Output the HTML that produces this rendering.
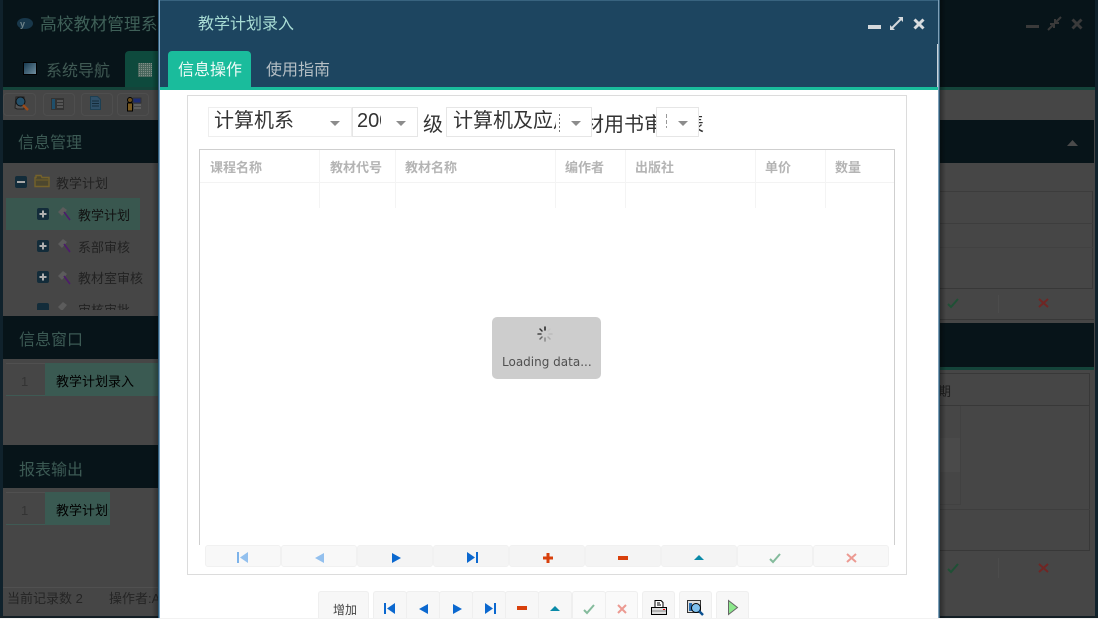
<!DOCTYPE html>
<html><head><meta charset="utf-8">
<style>
html,body{margin:0;padding:0;background:#fff;}
body{width:1098px;height:635px;overflow:hidden;position:relative;font-family:"Liberation Sans","Noto Sans CJK SC",sans-serif;}
.a{position:absolute;white-space:nowrap;}
.clip{overflow:hidden;}
svg{position:absolute;display:block;overflow:visible;}
.th{color:#b4b4b4;font-size:13px;font-weight:bold;top:159px;line-height:17px;}
.bar{top:545px;width:74px;height:20px;background:#f8f8f8;border:1px solid #f1f1f1;border-radius:3px;box-sizing:content-box;}
.btn{top:591px;height:27px;background:#f7f7f7;border:1px solid #efefef;border-bottom:none;border-radius:3px 3px 0 0;box-sizing:border-box;}
.tb{top:93px;height:23px;border:1px solid #4e4e4e;border-radius:4px;box-sizing:border-box;}
</style></head><body>

<!-- dimmed background window -->
<div class="a" style="left:0;top:0;width:1098px;height:618px;background:#464646;"></div>
<div class="a" style="left:0;top:0;width:1098px;height:87px;background:#071419;"></div>
<div class="a" style="left:0;top:87px;width:1098px;height:3px;background:#14443a;"></div>
<div class="a" style="left:0;top:0;width:3px;height:618px;background:#10222c;"></div>
<div class="a" style="left:1095px;top:0;width:3px;height:618px;background:#10222c;"></div>
<div class="a" style="left:0;top:616px;width:1098px;height:2px;background:#141f25;"></div>
<div class="a" style="left:0;top:618px;width:1098px;height:1px;background:#f2f2f2;"></div>

<svg style="left:17px;top:17px" width="16" height="13" viewBox="0 0 16 13"><ellipse cx="8" cy="6.500" rx="8" ry="5.500" fill="#18374a"/><text x="3" y="10" font-size="9" font-weight="bold" fill="#6f8389" font-family="Liberation Sans">y</text></svg>
<div class="a" style="left:40px;top:15px;font-size:16.800px;line-height:20px;color:#3f6058;width:120px;overflow:hidden;">高校教材管理系统</div>
<div class="a" style="left:23px;top:62px;width:14px;height:13px;background:linear-gradient(135deg,#173a50,#6f8d9e);border:1px solid #000;box-sizing:border-box;"></div>
<div class="a" style="left:46px;top:62px;font-size:16px;line-height:20px;color:#405a54;">系统导航</div>
<div class="a" style="left:125px;top:51px;width:35px;height:36px;background:#0e4a3d;border-radius:4px 0 0 0;"></div>
<div class="a" style="left:138px;top:63px;width:14px;height:14px;background:repeating-linear-gradient(90deg,rgba(70,100,90,.9) 0 1px,transparent 1px 2px),repeating-linear-gradient(0deg,#4d6a60 0 1px,#7f8f88 1px 2px);"></div>

<!-- toolbar icons -->
<div class="a tb" style="left:3px;width:33px;"></div>
<div class="a tb" style="left:43px;width:32px;"></div>
<div class="a tb" style="left:81px;width:32px;"></div>
<div class="a tb" style="left:117px;width:32px;"></div>
<svg style="left:13px;top:96px" width="16" height="16" viewBox="0 0 16 16"><path d="M3 1h8v12H4l-2-1z" fill="#555" stroke="#222"/><circle cx="7.500" cy="5.500" r="4.500" fill="#24506a" stroke="#111"/><path d="M10 9l5 5" stroke="#9a4a1a" stroke-width="2.500"/></svg>
<svg style="left:51px;top:98px" width="13" height="12" viewBox="0 0 13 12"><rect width="13" height="12" fill="#333"/><rect x="1" y="1" width="3" height="10" fill="#1f4f6b"/><path d="M6 3h6M6 6h6M6 9h6" stroke="#777"/></svg>
<svg style="left:90px;top:96px" width="11" height="14" viewBox="0 0 11 14"><path d="M.5 .5h7l3 3v10H.5z" fill="#2f5068" stroke="#1d3f52"/><path d="M2 5h7M2 7.500h7M2 10h7" stroke="#142b3a"/></svg>
<svg style="left:126px;top:97px" width="15" height="15" viewBox="0 0 15 15"><circle cx="4" cy="3" r="2.500" fill="#6a4e1c" stroke="#000"/><rect x="1.500" y="6" width="5" height="8" fill="#7a5a20" stroke="#000"/><rect x="7" y="1" width="8" height="5" fill="#1c2c74" stroke="#333"/><path d="M8 8h7M8 11h7" stroke="#666" stroke-width="1.500"/></svg>

<!-- left panel -->
<div class="a" style="left:3px;top:120px;width:155px;height:43px;background:#071419;"></div>
<div class="a" style="left:18px;top:134px;font-size:16px;line-height:20px;color:#3c5a54;">信息管理</div>
<div class="a" style="left:15px;top:176px;width:12px;height:12px;background:#132c3a;border-radius:2px;"></div>
<div class="a" style="left:17px;top:181px;width:8px;height:2px;background:#a8a8a8;"></div>
<svg style="left:34px;top:174px" width="16" height="14" viewBox="0 0 16 14"><path d="M1 3.500h1V1.500h5l1 2h7v9H1z" fill="#4c472f" stroke="#75622a" stroke-width="1.400"/><path d="M2 6h12" stroke="#75622a"/></svg>
<div class="a" style="left:56px;top:175px;font-size:13px;line-height:17px;color:#222;">教学计划</div>
<div class="a" style="left:6px;top:198px;width:134px;height:32px;background:#39574f;"></div>
<div class="a clip" style="left:0;top:198px;width:158px;height:112px;">
  <svg style="left:37px;top:10px" width="12" height="12" viewBox="0 0 12 12"><rect width="12" height="12" rx="2" fill="#132c3a"/><path d="M6 2.500v7M2.500 6h7" stroke="#b0b0b0" stroke-width="2"/></svg>
  <svg style="left:37px;top:42px" width="12" height="12" viewBox="0 0 12 12"><rect width="12" height="12" rx="2" fill="#132c3a"/><path d="M6 2.500v7M2.500 6h7" stroke="#b0b0b0" stroke-width="2"/></svg>
  <svg style="left:37px;top:73px" width="12" height="12" viewBox="0 0 12 12"><rect width="12" height="12" rx="2" fill="#132c3a"/><path d="M6 2.500v7M2.500 6h7" stroke="#b0b0b0" stroke-width="2"/></svg>
  <svg style="left:37px;top:105px" width="12" height="12" viewBox="0 0 12 12"><rect width="12" height="12" rx="2" fill="#132c3a"/></svg>
  <svg style="left:57px;top:8px" width="15" height="15" viewBox="0 0 15 15"><path d="M1 6l5-5 4 3-5 6z" fill="#5c5c5c"/><path d="M7 6l6 8" stroke="#4d1a6d" stroke-width="1.500"/></svg>
  <svg style="left:57px;top:40px" width="15" height="15" viewBox="0 0 15 15"><path d="M1 6l5-5 4 3-5 6z" fill="#5c5c5c"/><path d="M7 6l6 8" stroke="#4d1a6d" stroke-width="1.500"/></svg>
  <svg style="left:57px;top:72px" width="15" height="15" viewBox="0 0 15 15"><path d="M1 6l5-5 4 3-5 6z" fill="#5c5c5c"/><path d="M7 6l6 8" stroke="#4d1a6d" stroke-width="1.500"/></svg>
  <svg style="left:57px;top:103px" width="15" height="15" viewBox="0 0 15 15"><path d="M1 6l5-5 4 3-5 6z" fill="#5c5c5c"/></svg>
  <div class="a" style="left:78px;top:9px;font-size:13px;line-height:17px;color:#111;">教学计划</div>
  <div class="a" style="left:78px;top:41px;font-size:13px;line-height:17px;color:#222;">系部审核</div>
  <div class="a" style="left:78px;top:72px;font-size:13px;line-height:17px;color:#222;">教材室审核</div>
  <div class="a" style="left:78px;top:104px;font-size:13px;line-height:17px;color:#222;">审核审批</div>
</div>

<div class="a" style="left:3px;top:316px;width:155px;height:43px;background:#071419;"></div>
<div class="a" style="left:19px;top:331px;font-size:16px;line-height:20px;color:#3c5a54;">信息窗口</div>
<div class="a" style="left:6px;top:363px;width:39px;height:33px;border-bottom:1px solid #3f5a54;border-top:1px solid #505050;box-sizing:border-box;"></div>
<div class="a" style="left:45px;top:363px;width:113px;height:33px;background:#3a5a52;"></div>
<div class="a" style="left:21px;top:373px;font-size:13px;line-height:17px;color:#333;">1</div>
<div class="a" style="left:56px;top:373px;font-size:13px;line-height:17px;color:#000;">教学计划录入</div>

<div class="a" style="left:3px;top:445px;width:155px;height:43px;background:#071419;"></div>
<div class="a" style="left:19px;top:461px;font-size:16px;line-height:20px;color:#3c5a54;">报表输出</div>
<div class="a" style="left:6px;top:492px;width:39px;height:33px;border-bottom:1px solid #3f5a54;border-top:1px solid #505050;box-sizing:border-box;"></div>
<div class="a" style="left:45px;top:492px;width:65px;height:33px;background:#3a5a52;"></div>
<div class="a" style="left:21px;top:502px;font-size:13px;line-height:17px;color:#333;">1</div>
<div class="a clip" style="left:56px;top:502px;width:53px;font-size:13px;line-height:17px;color:#000;">教学计划录入</div>

<div class="a" style="left:3px;top:587px;width:155px;height:1px;background:#505050;"></div>
<div class="a" style="left:7px;top:590px;font-size:13px;line-height:17px;color:#252525;">当前记录数 2</div>
<div class="a clip" style="left:109px;top:590px;width:49px;font-size:13px;line-height:17px;color:#252525;">操作者:Admin</div>

<!-- right background -->
<div class="a" style="left:940px;top:120px;width:154px;height:43px;background:#071419;"></div>
<svg style="left:1067px;top:140px" width="11" height="6" viewBox="0 0 11 6"><path d="M5.500 0L11 6H0z" fill="#4a4a4a"/></svg>
<div class="a" style="left:940px;top:191px;width:153px;height:1px;background:#3c3c3c;"></div>
<div class="a" style="left:1092px;top:191px;width:1px;height:98px;background:#383838;"></div>
<div class="a" style="left:940px;top:223px;width:153px;height:1px;background:#3d3d3d;"></div>
<div class="a" style="left:940px;top:247px;width:153px;height:1px;background:#414141;"></div>
<div class="a" style="left:940px;top:288px;width:153px;height:1px;background:#383838;"></div>
<div class="a" style="left:940px;top:319px;width:154px;height:1px;background:#383838;"></div>
<div class="a" style="left:998px;top:295px;width:1px;height:18px;background:#4c4c4c;"></div>
<svg style="left:947px;top:298px" width="12" height="10" viewBox="0 0 12 10"><path d="M1 6l3 3 7-8" fill="none" stroke="#1f5035" stroke-width="2"/></svg>
<svg style="left:1038px;top:298px" width="11" height="10" viewBox="0 0 11 10"><path d="M1 1l9 8M10 1l-9 8" stroke="#702624" stroke-width="2"/></svg>
<div class="a" style="left:940px;top:323px;width:154px;height:44px;background:#071419;"></div>
<div class="a" style="left:940px;top:367px;width:154px;height:3px;background:#14443a;"></div>
<div class="a" style="left:940px;top:373px;width:150px;height:178px;border:1px solid #383838;border-left:none;box-sizing:border-box;"></div>
<div class="a" style="left:940px;top:405px;width:150px;height:1px;background:#383838;"></div>
<div class="a" style="left:940px;top:509px;width:150px;height:1px;background:#3e3e3e;"></div>
<div class="a" style="left:940px;top:438px;width:20px;height:34px;background:#4a4a4a;"></div>
<div class="a" style="left:960px;top:406px;width:1px;height:99px;background:#414141;"></div>
<div class="a" style="left:940px;top:504px;width:21px;height:1px;background:#414141;"></div>
<div class="a clip" style="left:940px;top:383px;width:11px;height:17px;font-size:13px;line-height:17px;color:#1c1c1c;"><span class="a" style="right:0;top:0;">日期</span></div>
<svg style="left:947px;top:563px" width="12" height="10" viewBox="0 0 12 10"><path d="M1 6l3 3 7-8" fill="none" stroke="#1f5035" stroke-width="2"/></svg>
<svg style="left:1038px;top:563px" width="11" height="10" viewBox="0 0 11 10"><path d="M1 1l9 8M10 1l-9 8" stroke="#702624" stroke-width="2"/></svg>
<div class="a" style="left:998px;top:558px;width:1px;height:20px;background:#4c4c4c;"></div>
<div class="a" style="left:1026px;top:25px;width:13px;height:3px;background:#3a3a3a;"></div>
<svg style="left:1047px;top:16px" width="15" height="15" viewBox="0 0 15 15"><path d="M14 1L9 6M1 14l5-5M8 3v4h4M3 8h4v4" fill="none" stroke="#3a3a3a" stroke-width="2"/></svg>
<svg style="left:1071px;top:18px" width="12" height="12" viewBox="0 0 12 12"><path d="M1.500 1.500l9 9M10.500 1.500l-9 9" stroke="#3a3a3a" stroke-width="3"/></svg>

<!-- shadows around dialog -->
<div class="a" style="left:152px;top:0;width:7px;height:618px;background:linear-gradient(90deg,rgba(0,0,0,0),rgba(0,0,0,.35));"></div>
<div class="a" style="left:940px;top:0;width:6px;height:618px;background:linear-gradient(270deg,rgba(0,0,0,0),rgba(0,0,0,.35));"></div>

<!-- dialog -->
<div class="a" style="left:158px;top:0;width:782px;height:618px;background:#fff;"></div>
<div class="a" style="left:158px;top:0;width:1px;height:618px;background:#2d5a78;"></div>
<div class="a" style="left:159px;top:0;width:1px;height:618px;background:#7fa6c4;"></div>
<div class="a" style="left:938px;top:0;width:1px;height:618px;background:#7fa0b8;"></div>
<div class="a" style="left:939px;top:0;width:1px;height:618px;background:#2f5872;"></div>
<div class="a" style="left:160px;top:0;width:778px;height:87px;background:#1d4560;border-top:1px solid #38637f;box-sizing:border-box;"></div>
<div class="a" style="left:937px;top:44px;width:1px;height:43px;background:#c9d3da;"></div>
<div class="a" style="left:160px;top:87px;width:778px;height:3px;background:#1abc9c;"></div>
<div class="a" style="left:198px;top:15px;font-size:16px;line-height:20px;color:#a8dcd4;">教学计划录入</div>
<div class="a" style="left:868px;top:25px;width:13px;height:4px;background:#d4d8db;"></div>
<svg style="left:889px;top:16px" width="15" height="15" viewBox="0 0 15 15"><path d="M13 2L2 13" stroke="#d4d8db" stroke-width="2"/><path d="M9 1h5v5zM1 9v5h5z" fill="#d4d8db"/></svg>
<svg style="left:913px;top:18px" width="12" height="12" viewBox="0 0 12 12"><path d="M1.500 1.500l9 9M10.500 1.500l-9 9" stroke="#d8dcdf" stroke-width="3"/></svg>
<div class="a" style="left:168px;top:51px;width:83px;height:36px;background:#1abc9c;border-radius:4px 4px 0 0;"></div>
<div class="a" style="left:178px;top:61px;font-size:16px;line-height:20px;color:#eefaf7;">信息操作</div>
<div class="a" style="left:266px;top:61px;font-size:16px;line-height:20px;color:#b4bec4;">使用指南</div>

<!-- form frame -->
<div class="a" style="left:187px;top:95px;width:720px;height:480px;border:1px solid #dcdcdc;box-sizing:border-box;"></div>

<!-- selectors -->
<div class="a" style="left:423px;top:113px;font-size:20px;line-height:24px;color:#333;">级</div>
<div class="a" style="left:584px;top:113px;font-size:20px;line-height:24px;color:#333;">材用书审核表</div>
<div class="a" style="left:208px;top:107px;width:144px;height:30px;background:#fff;border:1px solid #eee;box-sizing:border-box;"></div>
<div class="a" style="left:214px;top:110px;font-size:20px;line-height:22px;color:#333;">计算机系</div>
<div class="a" style="left:352px;top:107px;width:66px;height:30px;background:#fff;border:1px solid #e6e6e6;box-sizing:border-box;"></div>
<div class="a clip" style="left:357px;top:110px;width:24px;font-size:20px;line-height:22px;color:#333;">2005</div>
<div class="a" style="left:446px;top:107px;width:146px;height:30px;background:#fff;border:1px solid #e6e6e6;box-sizing:border-box;"></div>
<div class="a clip" style="left:453px;top:110px;width:103px;font-size:20px;line-height:22px;color:#333;">计算机及应用</div>
<div class="a" style="left:559px;top:114px;width:1px;height:18px;background:repeating-linear-gradient(180deg,#777 0 2px,transparent 2px 4px);"></div>
<div class="a" style="left:656px;top:107px;width:43px;height:30px;background:#fff;border:1px solid #e6e6e6;box-sizing:border-box;"></div>
<div class="a" style="left:666px;top:114px;width:1px;height:14px;background:repeating-linear-gradient(180deg,#999 0 4px,transparent 4px 6px);"></div>
<svg style="left:330px;top:121px" width="10" height="5"><path d="M0 0h10L5 5z" fill="#8c8c8c"/></svg>
<svg style="left:396px;top:121px" width="10" height="5"><path d="M0 0h10L5 5z" fill="#8c8c8c"/></svg>
<svg style="left:571px;top:121px" width="10" height="5"><path d="M0 0h10L5 5z" fill="#8c8c8c"/></svg>
<svg style="left:678px;top:121px" width="10" height="5"><path d="M0 0h10L5 5z" fill="#8c8c8c"/></svg>

<!-- grid -->
<div class="a" style="left:199px;top:149px;width:696px;height:396px;border:1px solid #cfcfcf;border-bottom:none;box-sizing:border-box;"></div>
<div class="a" style="left:200px;top:182px;width:694px;height:1px;background:#f3f3f3;"></div>
<div class="a" style="left:319px;top:150px;width:1px;height:58px;background:#f4f4f4;"></div>
<div class="a" style="left:395px;top:150px;width:1px;height:58px;background:#f4f4f4;"></div>
<div class="a" style="left:555px;top:150px;width:1px;height:58px;background:#f4f4f4;"></div>
<div class="a" style="left:625px;top:150px;width:1px;height:58px;background:#f4f4f4;"></div>
<div class="a" style="left:755px;top:150px;width:1px;height:58px;background:#f4f4f4;"></div>
<div class="a" style="left:825px;top:150px;width:1px;height:58px;background:#f4f4f4;"></div>
<div class="a th" style="left:210px;">课程名称</div>
<div class="a th" style="left:330px;">教材代号</div>
<div class="a th" style="left:405px;">教材名称</div>
<div class="a th" style="left:565px;">编作者</div>
<div class="a th" style="left:635px;">出版社</div>
<div class="a th" style="left:765px;">单价</div>
<div class="a th" style="left:835px;">数量</div>

<!-- loading -->
<div class="a" style="left:492px;top:317px;width:109px;height:62px;background:#cdcdcd;border-radius:5px;"></div>
<svg style="left:537px;top:326px" width="16" height="16" viewBox="0 0 16 16" stroke-width="1.500" stroke-linecap="round"><path d="M8 1v3" stroke="#222"/><path d="M3 3l2 2" stroke="#333"/><path d="M1 8h3" stroke="#444"/><path d="M3 13l2-2" stroke="#666"/><path d="M8 15v-3" stroke="#888"/><path d="M13 13l-2-2" stroke="#aaa"/><path d="M15 8h-3" stroke="#bbb"/><path d="M13 3l-2 2" stroke="#c4c4c4"/></svg>
<div class="a" style="left:502px;top:354px;font-family:'DejaVu Sans',sans-serif;font-size:12px;line-height:16px;color:#505050;">Loading data...</div>

<!-- grid toolbar -->
<div class="a bar" style="left:205px;"></div>
<div class="a bar" style="left:281px;"></div>
<div class="a bar" style="left:357px;background:#f4f4f4;"></div>
<div class="a bar" style="left:433px;background:#f4f4f4;"></div>
<div class="a bar" style="left:509px;background:#f4f4f4;"></div>
<div class="a bar" style="left:585px;background:#f4f4f4;"></div>
<div class="a bar" style="left:661px;background:#f4f4f4;"></div>
<div class="a bar" style="left:737px;"></div>
<div class="a bar" style="left:813px;"></div>
<svg style="left:237px;top:552px" width="12" height="11" viewBox="0 0 12 11"><path d="M1 0v11" stroke="#7db3ea" stroke-width="2"/><path d="M11 0v11L3 5.500z" fill="#93c0ee"/></svg>
<svg style="left:315px;top:553px" width="9" height="10" viewBox="0 0 9 10"><path d="M9 0v10L0 5z" fill="#93c0ee"/></svg>
<svg style="left:392px;top:553px" width="9" height="10" viewBox="0 0 9 10"><path d="M0 0v10l9-5z" fill="#0b68cf"/></svg>
<svg style="left:466px;top:552px" width="12" height="11" viewBox="0 0 12 11"><path d="M11 0v11" stroke="#0b68cf" stroke-width="2"/><path d="M1 0v11l8-5.500z" fill="#0b68cf"/></svg>
<svg style="left:543px;top:553px" width="10" height="10" viewBox="0 0 10 10"><path d="M5 0v10M0 5h10" stroke="#d8400c" stroke-width="3"/></svg>
<div class="a" style="left:618px;top:556px;width:10px;height:4px;background:#d8400c;"></div>
<svg style="left:694px;top:555px" width="10" height="5" viewBox="0 0 10 5"><path d="M5 0l5 5H0z" fill="#0a8aa8"/></svg>
<svg style="left:769px;top:553px" width="12" height="10" viewBox="0 0 12 10"><path d="M1 6l3 3 7-8" fill="none" stroke="#84bb9c" stroke-width="2"/></svg>
<svg style="left:846px;top:553px" width="11" height="10" viewBox="0 0 11 10"><path d="M1 1l9 8M10 1l-9 8" stroke="#ec9a92" stroke-width="2"/></svg>

<!-- bottom buttons -->
<div class="a btn" style="left:318px;width:51px;"></div>
<div class="a" style="left:333px;top:602px;font-size:12px;line-height:16px;color:#444;">增加</div>
<div class="a btn" style="left:373px;width:34px;"></div>
<div class="a btn" style="left:406px;width:34px;"></div>
<div class="a btn" style="left:439px;width:34px;"></div>
<div class="a btn" style="left:472px;width:34px;"></div>
<div class="a btn" style="left:505px;width:34px;"></div>
<div class="a btn" style="left:538px;width:34px;"></div>
<div class="a btn" style="left:572px;width:34px;background:#fafafa;"></div>
<div class="a btn" style="left:605px;width:33px;background:#fafafa;"></div>
<div class="a btn" style="left:642px;width:33px;"></div>
<div class="a btn" style="left:679px;width:33px;"></div>
<div class="a btn" style="left:716px;width:33px;"></div>
<svg style="left:384px;top:603px" width="12" height="11" viewBox="0 0 12 11"><path d="M1 0v11" stroke="#0b68cf" stroke-width="2"/><path d="M11 0v11L3 5.500z" fill="#0b68cf"/></svg>
<svg style="left:419px;top:604px" width="9" height="10" viewBox="0 0 9 10"><path d="M9 0v10L0 5z" fill="#0b68cf"/></svg>
<svg style="left:453px;top:604px" width="9" height="10" viewBox="0 0 9 10"><path d="M0 0v10l9-5z" fill="#0b68cf"/></svg>
<svg style="left:484px;top:603px" width="12" height="11" viewBox="0 0 12 11"><path d="M11 0v11" stroke="#0b68cf" stroke-width="2"/><path d="M1 0v11l8-5.500z" fill="#0b68cf"/></svg>
<div class="a" style="left:517px;top:606px;width:10px;height:4px;background:#d8400c;"></div>
<svg style="left:550px;top:606px" width="10" height="5" viewBox="0 0 10 5"><path d="M5 0l5 5H0z" fill="#0a8aa8"/></svg>
<svg style="left:583px;top:604px" width="12" height="10" viewBox="0 0 12 10"><path d="M1 6l3 3 7-8" fill="none" stroke="#84bb9c" stroke-width="2"/></svg>
<svg style="left:617px;top:604px" width="10" height="10" viewBox="0 0 10 10"><path d="M1 1l8 8M9 1l-8 8" stroke="#ec9a92" stroke-width="2"/></svg>
<svg style="left:651px;top:600px" width="16" height="15" viewBox="0 0 16 15"><path d="M4 .5h6l2 2V8H4z" fill="#fff" stroke="#000"/><path d="M6 3h3M6 5h4" stroke="#000"/><rect x=".5" y="7.500" width="15" height="7" fill="#ddd" stroke="#000"/><path d="M1 11h14" stroke="#888"/><rect x="12" y="9" width="2" height="1" fill="#e00"/></svg>
<svg style="left:687px;top:600px" width="18" height="16" viewBox="0 0 18 16"><rect x=".5" y=".5" width="13" height="12" fill="#ddd" stroke="#333"/><rect x="2" y="3" width="3" height="8" fill="#2c6fb0"/><circle cx="9" cy="8" r="4.500" fill="#7fc0ee" stroke="#000"/><path d="M12 11l4 4" stroke="#0a4f90" stroke-width="2.500"/></svg>
<svg style="left:728px;top:600px" width="10" height="15" viewBox="0 0 10 15"><path d="M.5 .5v14L9.500 7.500z" fill="#8ce88c" stroke="#666"/></svg>

</body></html>
